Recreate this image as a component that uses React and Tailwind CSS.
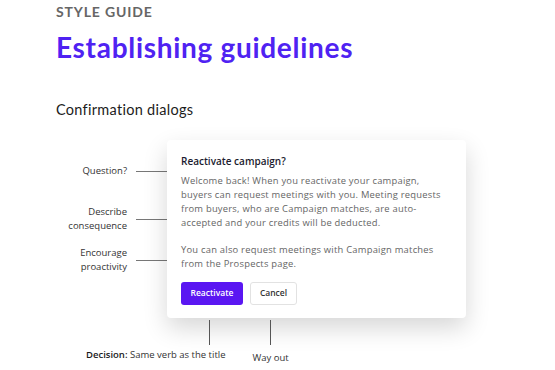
import React from 'react';

// small helper for the left side notes with a connector line
const Note = ({ children, className }) => (
    <div className={`flex items-center ${className}`}>
        <div className="w-[127px] text-right text-[9.5px] leading-[14px] text-[#333]">{children}</div>
        <div className="ml-[9px] h-px w-[31px] bg-[#777]"></div>
    </div>
);

const App = () => {
    return (
        <div className="w-[555px] h-[370px] overflow-hidden bg-white font-['Open_Sans',sans-serif]">
            {/* header */}
            <div className="pl-[56px] pt-[3px] font-['Lato',sans-serif]">
                <div className="text-[14px] leading-[18px] font-bold tracking-[0.06em] text-[#666]">STYLE GUIDE</div>
                <h1 className="mt-[10px] text-[28px] leading-[32px] font-bold tracking-[0.025em] text-[#4f22f2]">Establishing guidelines</h1>
                <div className="mt-[38px] text-[14.5px] leading-[18px] text-[#1c1c1c] tracking-[0.02em]">Confirmation dialogs</div>
            </div>

            <div className="mt-[21px] flex">
                {/* annotations */}
                <div className="flex flex-col w-[167px]">
                    <Note className="mt-[24px]">Question?</Note>
                    <Note className="mt-[27px]">Describe<br />consequence</Note>
                    <Note className="mt-[13px]">Encourage<br />proactivity</Note>
                </div>

                {/* dialog */}
                <div className="w-[299px] rounded-[4px] bg-white pl-[14px] pr-[18px] pt-[14px] pb-[13px] shadow-[0_10px_24px_rgba(0,0,0,0.16)]">
                    <div className="text-[10px] leading-[14px] font-semibold text-[#1b1b2f]">Reactivate campaign?</div>
                    <p className="mt-[6px] text-[9.4px] leading-[14px] tracking-[0.025em] text-[#666]">
                        Welcome back! When you reactivate your campaign, buyers can request meetings with you. Meeting requests from buyers, who are Campaign matches, are auto-accepted and your credits will be deducted.
                    </p>
                    <p className="mt-[13px] text-[9.4px] leading-[14px] tracking-[0.025em] text-[#666]">
                        You can also request meetings with Campaign matches from the Prospects page.
                    </p>
                    <div className="mt-[11px] flex gap-[7px]">
                        <button className="h-[23px] w-[62px] rounded-[3px] bg-[#5a16f2] text-[8.5px] font-semibold text-white">Reactivate</button>
                        <button className="h-[23px] w-[47px] rounded-[3px] border border-[#e2e2e2] bg-white text-[8.5px] font-semibold text-[#333]">Cancel</button>
                    </div>
                </div>
            </div>

            {/* bottom notes */}
            <div className="flex mt-[2px]">
                <div className="ml-[209px] h-[25px] w-px bg-[#555]"></div>
                <div className="ml-[60px] h-[25px] w-px bg-[#555]"></div>
            </div>
            <div className="flex items-start mt-[3px] text-[9.5px] leading-[14px] text-[#333]">
                <div className="ml-[86px]"><span className="font-semibold text-[#1b1b1b]">Decision:</span> Same verb as the title</div>
                <div className="ml-[27px] mt-[3px]">Way out</div>
            </div>
        </div>
    );
};

export default App;
